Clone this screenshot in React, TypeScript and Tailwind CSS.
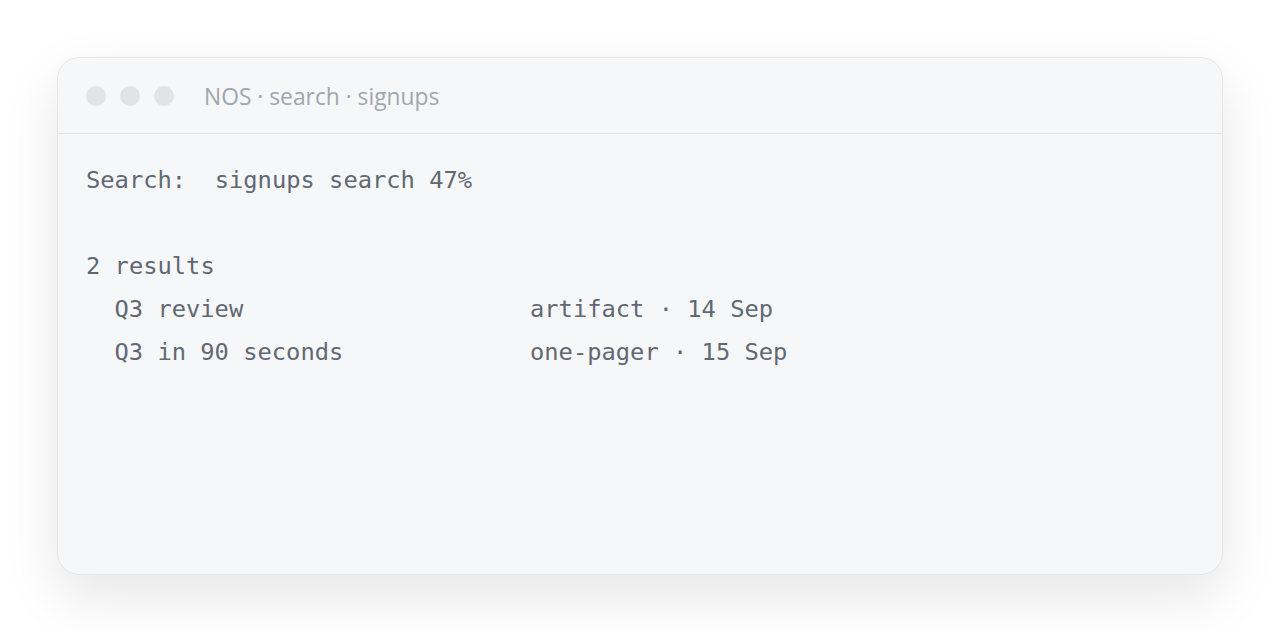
export default function App() {
  const mono = { fontFamily: '"DejaVu Sans Mono", "Liberation Mono", monospace' };
  const rows = [
    { title: "Q3 review", meta: "artifact · 14 Sep" },
    { title: "Q3 in 90 seconds", meta: "one-pager · 15 Sep" },
  ];

  return (
    <main className="w-screen h-screen bg-white px-[57px] pt-[57px]">
      {/* Window */}
      <div className="h-[518px] rounded-[22px] border border-[#e4e6ea] bg-[#f6f7f9] shadow-[0_22px_55px_rgba(0,0,0,0.10)] overflow-hidden">
        {/* Title bar */}
        <div className="h-[76px] flex items-center gap-[14px] px-[28px] border-b border-[#e3e5e9]">
          <span className="w-5 h-5 rounded-full bg-[#e1e3e7]"></span>
          <span className="w-5 h-5 rounded-full bg-[#e1e3e7]"></span>
          <span className="w-5 h-5 rounded-full bg-[#e1e3e7]"></span>
          <span className="ml-[16px] pt-[4px] text-[22.8px] text-[#a1a6ae]" style={{ fontFamily: '"Open Sans", "Noto Sans", sans-serif' }}>
            NOS · search · signups
          </span>
        </div>

        {/* Terminal body */}
        <div className="px-[28px] pt-[25px] text-[23.75px] leading-[43px] text-[#616873] whitespace-pre" style={mono}>
          <div>Search:  signups search 47%</div>
          <div>&nbsp;</div>
          <div>2 results</div>
          {rows.map((r) => (
            <div key={r.title} className="flex">
              <span className="w-[444px] pl-[28.5px]">{r.title}</span>
              <span>{r.meta}</span>
            </div>
          ))}
        </div>
      </div>
    </main>
  );
}
